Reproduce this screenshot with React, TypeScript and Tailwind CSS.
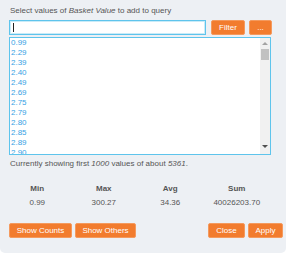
import React from "react";

const items = ["0.99","2.29","2.39","2.40","2.49","2.69","2.75","2.79","2.80","2.85","2.89","2.90"];

const btn = "h-[15px] rounded-[2px] bg-[#f27c2e] border border-[#f49a5e] text-white text-[8px] leading-[13px] flex items-center justify-center";

export default function App() {
  return (
    <div className="w-[287px] h-[255px] bg-white" style={{ fontFamily: '"Liberation Sans", Arial, sans-serif' }}>
      <div className="h-[253px] w-[286px] bg-[#edf0f4] rounded-b-[5px] px-[9px] pt-[6px] text-[#555] text-[8px]">
        <div className="leading-[10px] pl-[1px]">
          Select values of <i>Basket Value</i> to add to query
        </div>
        <div className="flex mt-[4px] h-[15px]">
          <div className="w-[197px] h-[15px] bg-white border border-[#5ec4ec] shadow-[0_0_0_1px_#c9ebf8_inset] flex items-center pl-[3px]">
            <span className="w-px h-[9px] bg-[#222]" />
          </div>
          <div className={`${btn} w-[34px] ml-[5px]`}>Filter</div>
          <div className={`${btn} w-[23px] ml-[4px] text-[6px]`}>...</div>
        </div>
        <div className="mt-[2px] w-[262px] h-[118px] bg-white border border-[#5ec4ec] flex overflow-hidden">
          <div className="flex-1 pl-[1px] overflow-hidden">
            {items.map((v) => (
              <div key={v} className="leading-[10px] h-[10px] text-[#35a2e4]">{v}</div>
            ))}
          </div>
          <div className="w-[10px] bg-[#f1f1f1] flex flex-col items-center">
            <div className="mt-[4px] w-0 h-0 border-l-[3px] border-r-[3px] border-b-[3px] border-l-transparent border-r-transparent border-b-[#a3a3a3]" />
            <div className="mt-[4px] w-[8px] h-[11px] bg-[#c1c1c1]" />
            <div className="flex-1" />
            <div className="mb-[6px] w-0 h-0 border-l-[3px] border-r-[3px] border-t-[3px] border-l-transparent border-r-transparent border-t-[#505050]" />
          </div>
        </div>
        <div className="mt-[4px] leading-[10px] pl-[1px]">
          Currently showing first <i>1000</i> values of about <i>5361</i>.
        </div>
        <div className="grid grid-cols-4 w-[266px] -ml-[5px] mt-[15px] text-center">
          <div className="font-bold leading-[10px]">Min</div>
          <div className="font-bold leading-[10px]">Max</div>
          <div className="font-bold leading-[10px]">Avg</div>
          <div className="font-bold leading-[10px]">Sum</div>
          <div className="leading-[10px] mt-[4px]">0.99</div>
          <div className="leading-[10px] mt-[4px]">300.27</div>
          <div className="leading-[10px] mt-[4px]">34.36</div>
          <div className="leading-[10px] mt-[4px]">40026203.70</div>
        </div>
        <div className="flex mt-[15px]">
          <div className={`${btn} w-[63px]`}>Show Counts</div>
          <div className={`${btn} w-[61px] ml-[3px]`}>Show Others</div>
          <div className="flex-1" />
          <div className={`${btn} w-[37px]`}>Close</div>
          <div className={`${btn} w-[35px] ml-[3px] -mr-[6px]`}>Apply</div>
        </div>
      </div>
    </div>
  );
}
